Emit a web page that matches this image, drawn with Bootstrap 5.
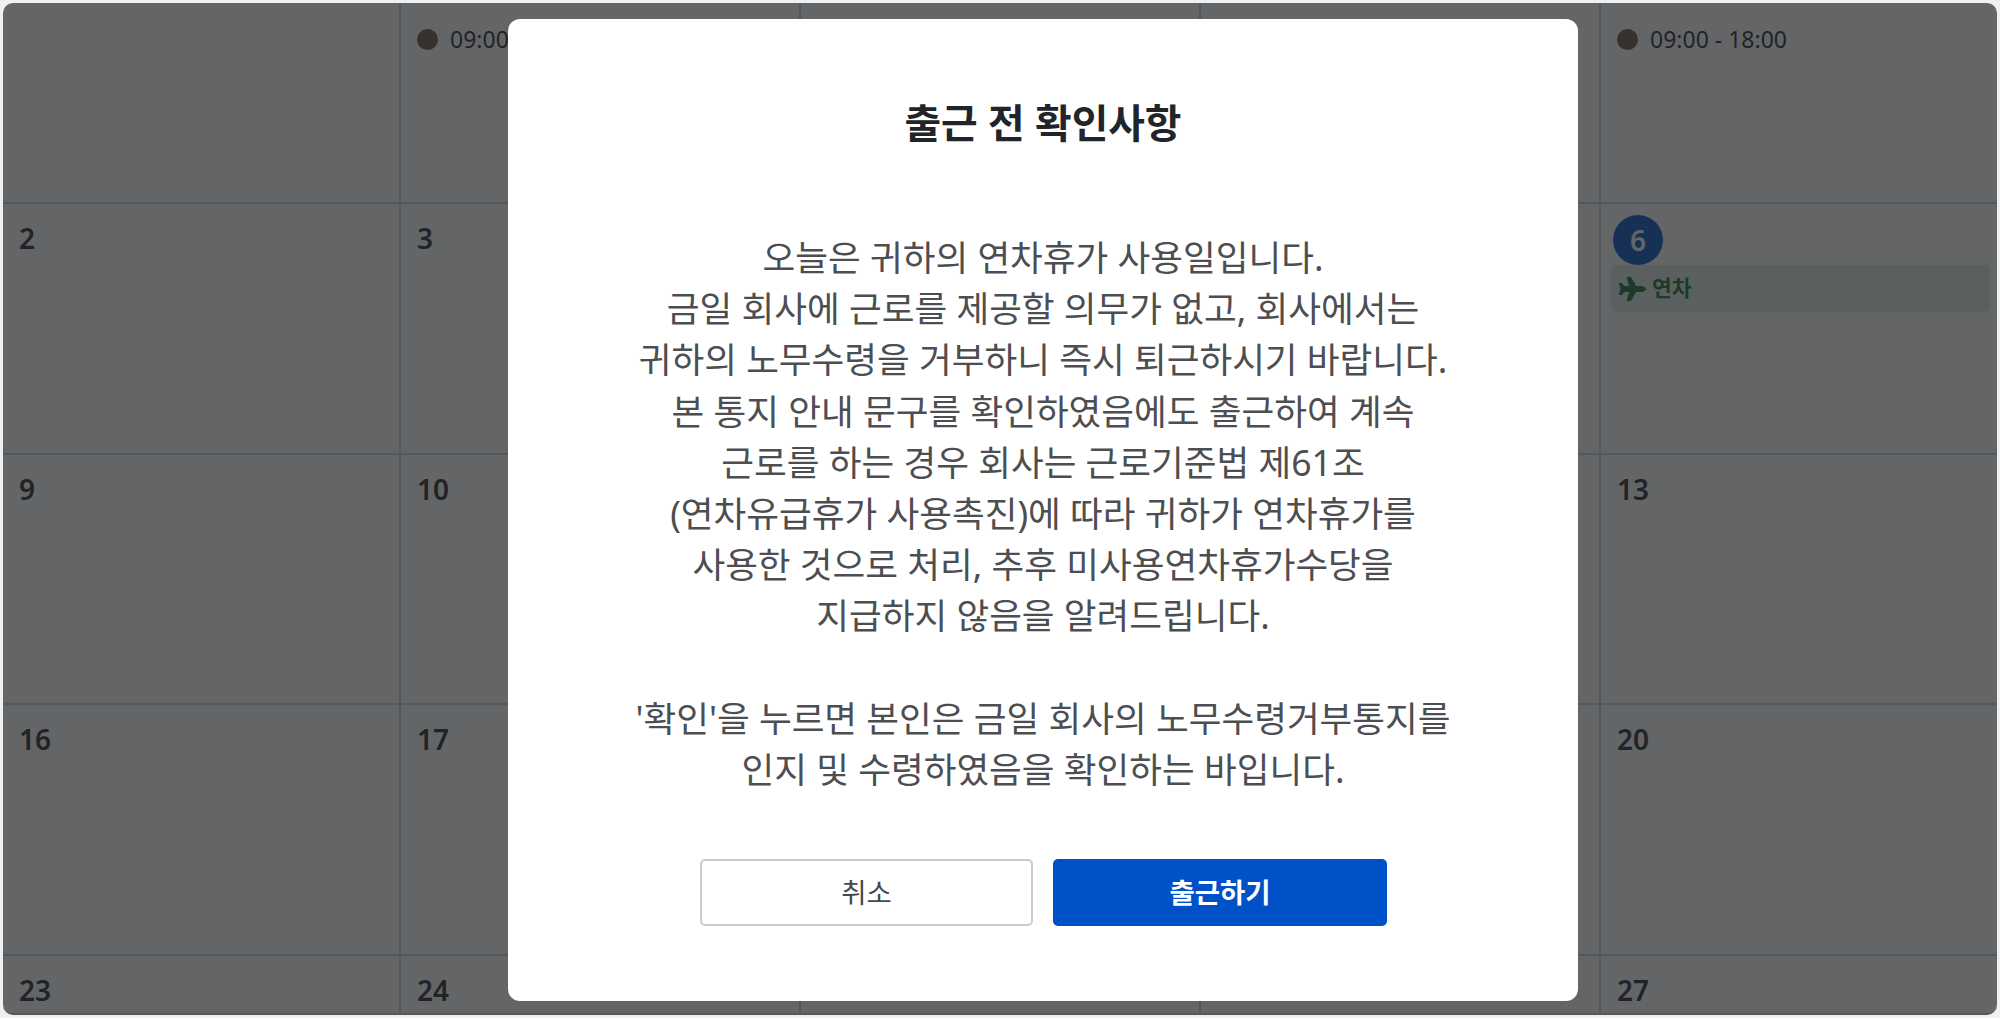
<!doctype html>
<html lang="ko">
<head>
<meta charset="utf-8">
<title>출근 전 확인사항</title>
<link rel="stylesheet" href="https://cdn.jsdelivr.net/npm/bootstrap@5.3.0/dist/css/bootstrap.min.css">
<style>
html,body{height:100%;}
body{margin:0;background:#eef0f1;overflow:hidden;font-family:"Noto Sans","Noto Sans CJK KR",sans-serif;color:#212529;}
.shell{height:1018px;padding:3px;}
.board{height:1012px;border-radius:10px;overflow:hidden;background:#fff;}
.cal{display:grid;grid-template-columns:398px 400px 400px 400px 1fr;grid-template-rows:201px 251px 250px 251px 1fr;height:100%;}
.cell{border-right:2px solid #d0d2d6;border-bottom:2px solid #d0d2d6;padding:15px 16px 0;}
.cell:nth-child(5n){border-right:0;}
.daynum{font-size:28px;font-weight:600;line-height:38px;}
.time{font-size:23px;line-height:36px;margin-top:3px;gap:12px;white-space:nowrap;}
.dot{width:21px;height:21px;border-radius:50%;background:#6a5446;flex:none;}
.today{padding:11px 7px 0 10px;}
.todaynum{width:50px;height:50px;border-radius:50%;background:#0050c7;color:#fff;font-size:28px;font-weight:600;margin-left:2px;}
.leave{height:47px;background:#dfeee5;border-radius:5px;padding-left:8px;gap:6px;color:#12702a;font-size:21.5px;font-weight:700;}
.planeicon{width:27px;height:24px;fill:#12702a;flex:none;}
.scrim{background:rgba(33,36,39,.7);z-index:5;padding:2px 0 0 505px;}
.dialog{width:1070px;height:982px;background:#fff;border:0;border-radius:12px;padding:74px 0 0;}
.dtitle{font-size:39.8px;font-weight:700;line-height:60px;color:#212529;margin:0;}
.dbody{font-size:35.6px;line-height:51.2px;color:#4c4e51;margin:79px 0 0;}
.dactions{margin-top:64px;gap:20px;}
.dbtn{width:334px;height:67px;border-radius:5px;font-size:27.5px;padding:0;}
.dbtn-cancel{width:333px;margin-left:1px;background:#fff;border:2px solid #c9ccd4;color:#44474b;}
.dbtn-go{background:#0050c7;border:2px solid #0050c7;color:#fff;font-weight:600;}
</style>
</head>
<body>
<div class="shell">
  <div class="board position-relative">
    <div class="cal">
      <div class="cell"></div>
      <div class="cell"><div class="time d-flex align-items-center"><span class="dot"></span>09:00 - 18:00</div></div>
      <div class="cell"></div>
      <div class="cell"></div>
      <div class="cell"><div class="time d-flex align-items-center"><span class="dot"></span>09:00 - 18:00</div></div>

      <div class="cell"><div class="daynum">2</div></div>
      <div class="cell"><div class="daynum">3</div></div>
      <div class="cell"></div>
      <div class="cell"></div>
      <div class="cell today">
        <div class="todaynum d-flex align-items-center justify-content-center">6</div>
        <div class="leave d-flex align-items-center">
          <svg class="planeicon" viewBox="0 0 576 512" aria-hidden="true"><path d="M480 192H365.71L260.61 8.06A16.014 16.014 0 0 0 246.71 0h-65.5c-10.63 0-18.3 10.17-15.38 20.39L214.86 192H112l-43.2-57.6c-3.02-4.03-7.77-6.4-12.8-6.4H16.01C5.6 128-2.04 137.78.49 147.88L32 256 .49 364.12C-2.04 374.22 5.6 384 16.01 384H56c5.04 0 9.78-2.37 12.8-6.4L112 320h102.86l-49.03 171.6c-2.92 10.22 4.75 20.4 15.38 20.4h65.5c5.74 0 11.04-3.08 13.89-8.06L365.71 320H480c35.35 0 96-28.65 96-64s-60.65-64-96-64z"/></svg>
          <span>연차</span>
        </div>
      </div>

      <div class="cell"><div class="daynum">9</div></div>
      <div class="cell"><div class="daynum">10</div></div>
      <div class="cell"></div>
      <div class="cell"></div>
      <div class="cell"><div class="daynum">13</div></div>

      <div class="cell"><div class="daynum">16</div></div>
      <div class="cell"><div class="daynum">17</div></div>
      <div class="cell"></div>
      <div class="cell"></div>
      <div class="cell"><div class="daynum">20</div></div>

      <div class="cell"><div class="daynum">23</div></div>
      <div class="cell"><div class="daynum">24</div></div>
      <div class="cell"></div>
      <div class="cell"></div>
      <div class="cell"><div class="daynum">27</div></div>
    </div>

    <div class="scrim position-absolute top-0 start-0 w-100 h-100 d-flex align-items-center">
      <div class="dialog text-center d-flex flex-column align-items-center" role="dialog">
        <h5 class="dtitle">출근 전 확인사항</h5>
        <p class="dbody">오늘은 귀하의 연차휴가 사용일입니다.<br>금일 회사에 근로를 제공할 의무가 없고, 회사에서는<br>귀하의 노무수령을 거부하니 즉시 퇴근하시기 바랍니다.<br>본 통지 안내 문구를 확인하였음에도 출근하여 계속<br>근로를 하는 경우 회사는 근로기준법 제61조<br>(연차유급휴가 사용촉진)에 따라 귀하가 연차휴가를<br>사용한 것으로 처리, 추후 미사용연차휴가수당을<br>지급하지 않음을 알려드립니다.<br><br>'확인'을 누르면 본인은 금일 회사의 노무수령거부통지를<br>인지 및 수령하였음을 확인하는 바입니다.</p>
        <div class="dactions d-flex">
          <button type="button" class="btn dbtn dbtn-cancel">취소</button>
          <button type="button" class="btn dbtn dbtn-go">출근하기</button>
        </div>
      </div>
    </div>
  </div>
</div>
<script src="https://cdn.jsdelivr.net/npm/bootstrap@5.3.0/dist/js/bootstrap.bundle.min.js"></script>
</body>
</html>
